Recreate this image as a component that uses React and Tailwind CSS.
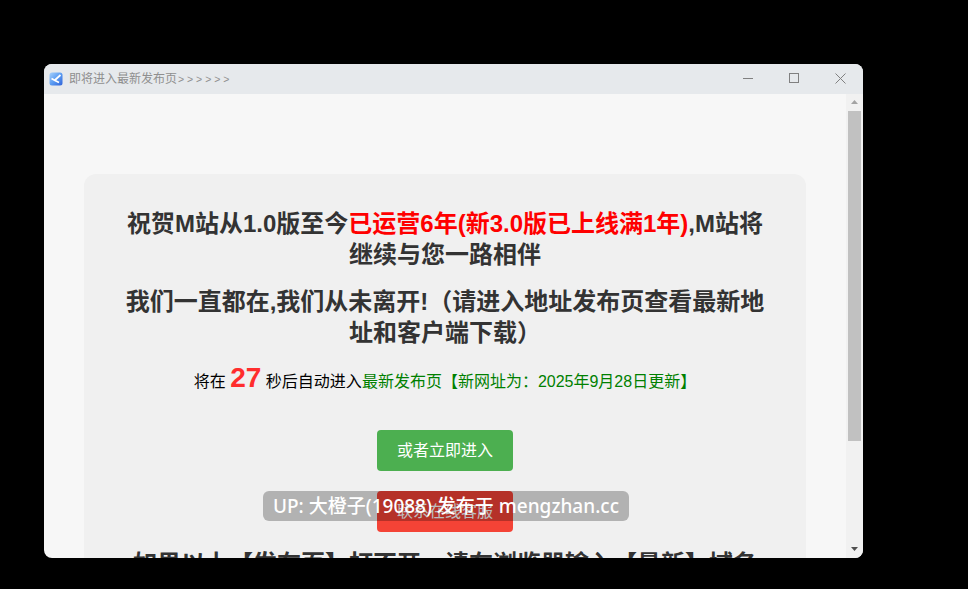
const sans = "font-['Liberation_Sans','Noto_Sans_CJK_SC',sans-serif]";

function AppIcon() {
  return (
    <svg width="14" height="14" viewBox="0 0 14 14" className="shrink-0">
      <defs>
        <linearGradient id="appIconFill" x1="0" y1="0" x2="1" y2="1">
          <stop offset="0" stopColor="#a9d2fb" />
          <stop offset="0.5" stopColor="#5b9cf2" />
          <stop offset="1" stopColor="#2f62d8" />
        </linearGradient>
      </defs>
      <rect x="0.5" y="0.5" width="13" height="13" rx="2.5" fill="url(#appIconFill)" />
      <path d="M11.5 3 L6 8 M2.5 6.5 L6 8.5 L10 10.5" stroke="#fff" strokeWidth="1.7" fill="none" />
    </svg>
  );
}

function WindowButtons() {
  return (
    <div className="ml-auto flex items-center pb-[2px] text-[#808080]">
      <span className="flex w-[46px] justify-center">
        <svg width="10" height="10" viewBox="0 0 10 10"><path d="M0 5.5 H10" stroke="currentColor" fill="none" /></svg>
      </span>
      <span className="flex w-[46px] justify-center">
        <svg width="10" height="10" viewBox="0 0 10 10"><rect x="0.5" y="0.5" width="9" height="9" stroke="currentColor" fill="none" /></svg>
      </span>
      <span className="flex w-[46px] justify-center">
        <svg width="11" height="11" viewBox="0 0 11 11"><path d="M0.5 0.5 L10.5 10.5 M10.5 0.5 L0.5 10.5" stroke="currentColor" fill="none" /></svg>
      </span>
    </div>
  );
}

function Heading({ children }) {
  return <h1 className="text-[24px] leading-[31px] font-bold text-[#333333] text-center mb-[16px]">{children}</h1>;
}

export default function App() {
  return (
    <div className={`h-[589px] w-[968px] overflow-hidden bg-black pt-[64px] pl-[44px] ${sans}`}>
      <div className="relative flex h-[494px] w-[819px] flex-col overflow-hidden rounded-[8px] bg-[#f7f7f7]">
        {/* title bar */}
        <div className="flex h-[30px] shrink-0 items-center bg-[#e6e9ec] pl-[5px]">
          <AppIcon />
          <span className="ml-[6px] text-[12px] text-[#8f8f8f]">
            即将进入最新发布页<span className="ml-[1px] text-[10.5px]">&gt; &gt; &gt; &gt; &gt; &gt;</span>
          </span>
          <WindowButtons />
        </div>

        <div className="flex min-h-0 flex-1">
          <div className="min-w-0 flex-1 overflow-hidden px-[40px] pt-[80px]">
            <div className="rounded-[12px] bg-[#f0f0f0] px-[40px] pt-[34px]">
              <Heading>
                祝贺M站从1.0版至今<span className="text-[#ff0000]">已运营6年(新3.0版已上线满1年)</span>,M站将继续与您一路相伴
              </Heading>
              <Heading>我们一直都在,我们从未离开!（请进入地址发布页查看最新地址和客户端下载）</Heading>
              <p className="mt-[18px] text-center text-[16px] leading-[24px] text-black">
                将在 <span className="text-[28px] font-bold text-[#ff2d2d]">27</span> 秒后自动进入
                <span className="text-[#008000]">最新发布页【新网址为：2025年9月28日更新】</span>
              </p>
              <div className="mt-[36px] flex flex-col items-center gap-[20px]">
                <button className="h-[41px] w-[136px] rounded-[4px] bg-[#4caf50] pt-[1px] text-[16px] text-white">或者立即进入</button>
                <button className="h-[41px] w-[136px] rounded-[4px] bg-[#f44336] pt-[1px] text-[16px] text-white">联系在线客服</button>
              </div>
              <Heading>
                <span className="mt-[16px] block">如果以上【发布页】打不开，请在浏览器输入【最新】域名</span>
              </Heading>
            </div>
          </div>

          {/* scrollbar */}
          <div className="flex w-[17px] shrink-0 flex-col items-center bg-[#f1f1f1]">
            <svg width="9" height="17" viewBox="0 0 9 17" className="shrink-0"><path d="M1 10 L4.5 6 L8 10 Z" fill="#a3a3a3" /></svg>
            <div className="h-[330px] w-[13px] bg-[#c1c1c1]" />
            <div className="flex-1" />
            <svg width="9" height="17" viewBox="0 0 9 17" className="shrink-0"><path d="M1 6 L8 6 L4.5 10 Z" fill="#505050" /></svg>
          </div>
        </div>

        {/* watermark */}
        <div className="absolute left-[219px] top-[427px] flex h-[30px] w-[366px] items-center justify-center rounded-[6px] bg-[rgba(0,0,0,0.26)] font-['Noto_Sans','Noto_Sans_CJK_SC',sans-serif] text-[19px] font-medium text-white">
          UP: 大橙子(19088) 发布于 mengzhan.cc
        </div>
      </div>
    </div>
  );
}
